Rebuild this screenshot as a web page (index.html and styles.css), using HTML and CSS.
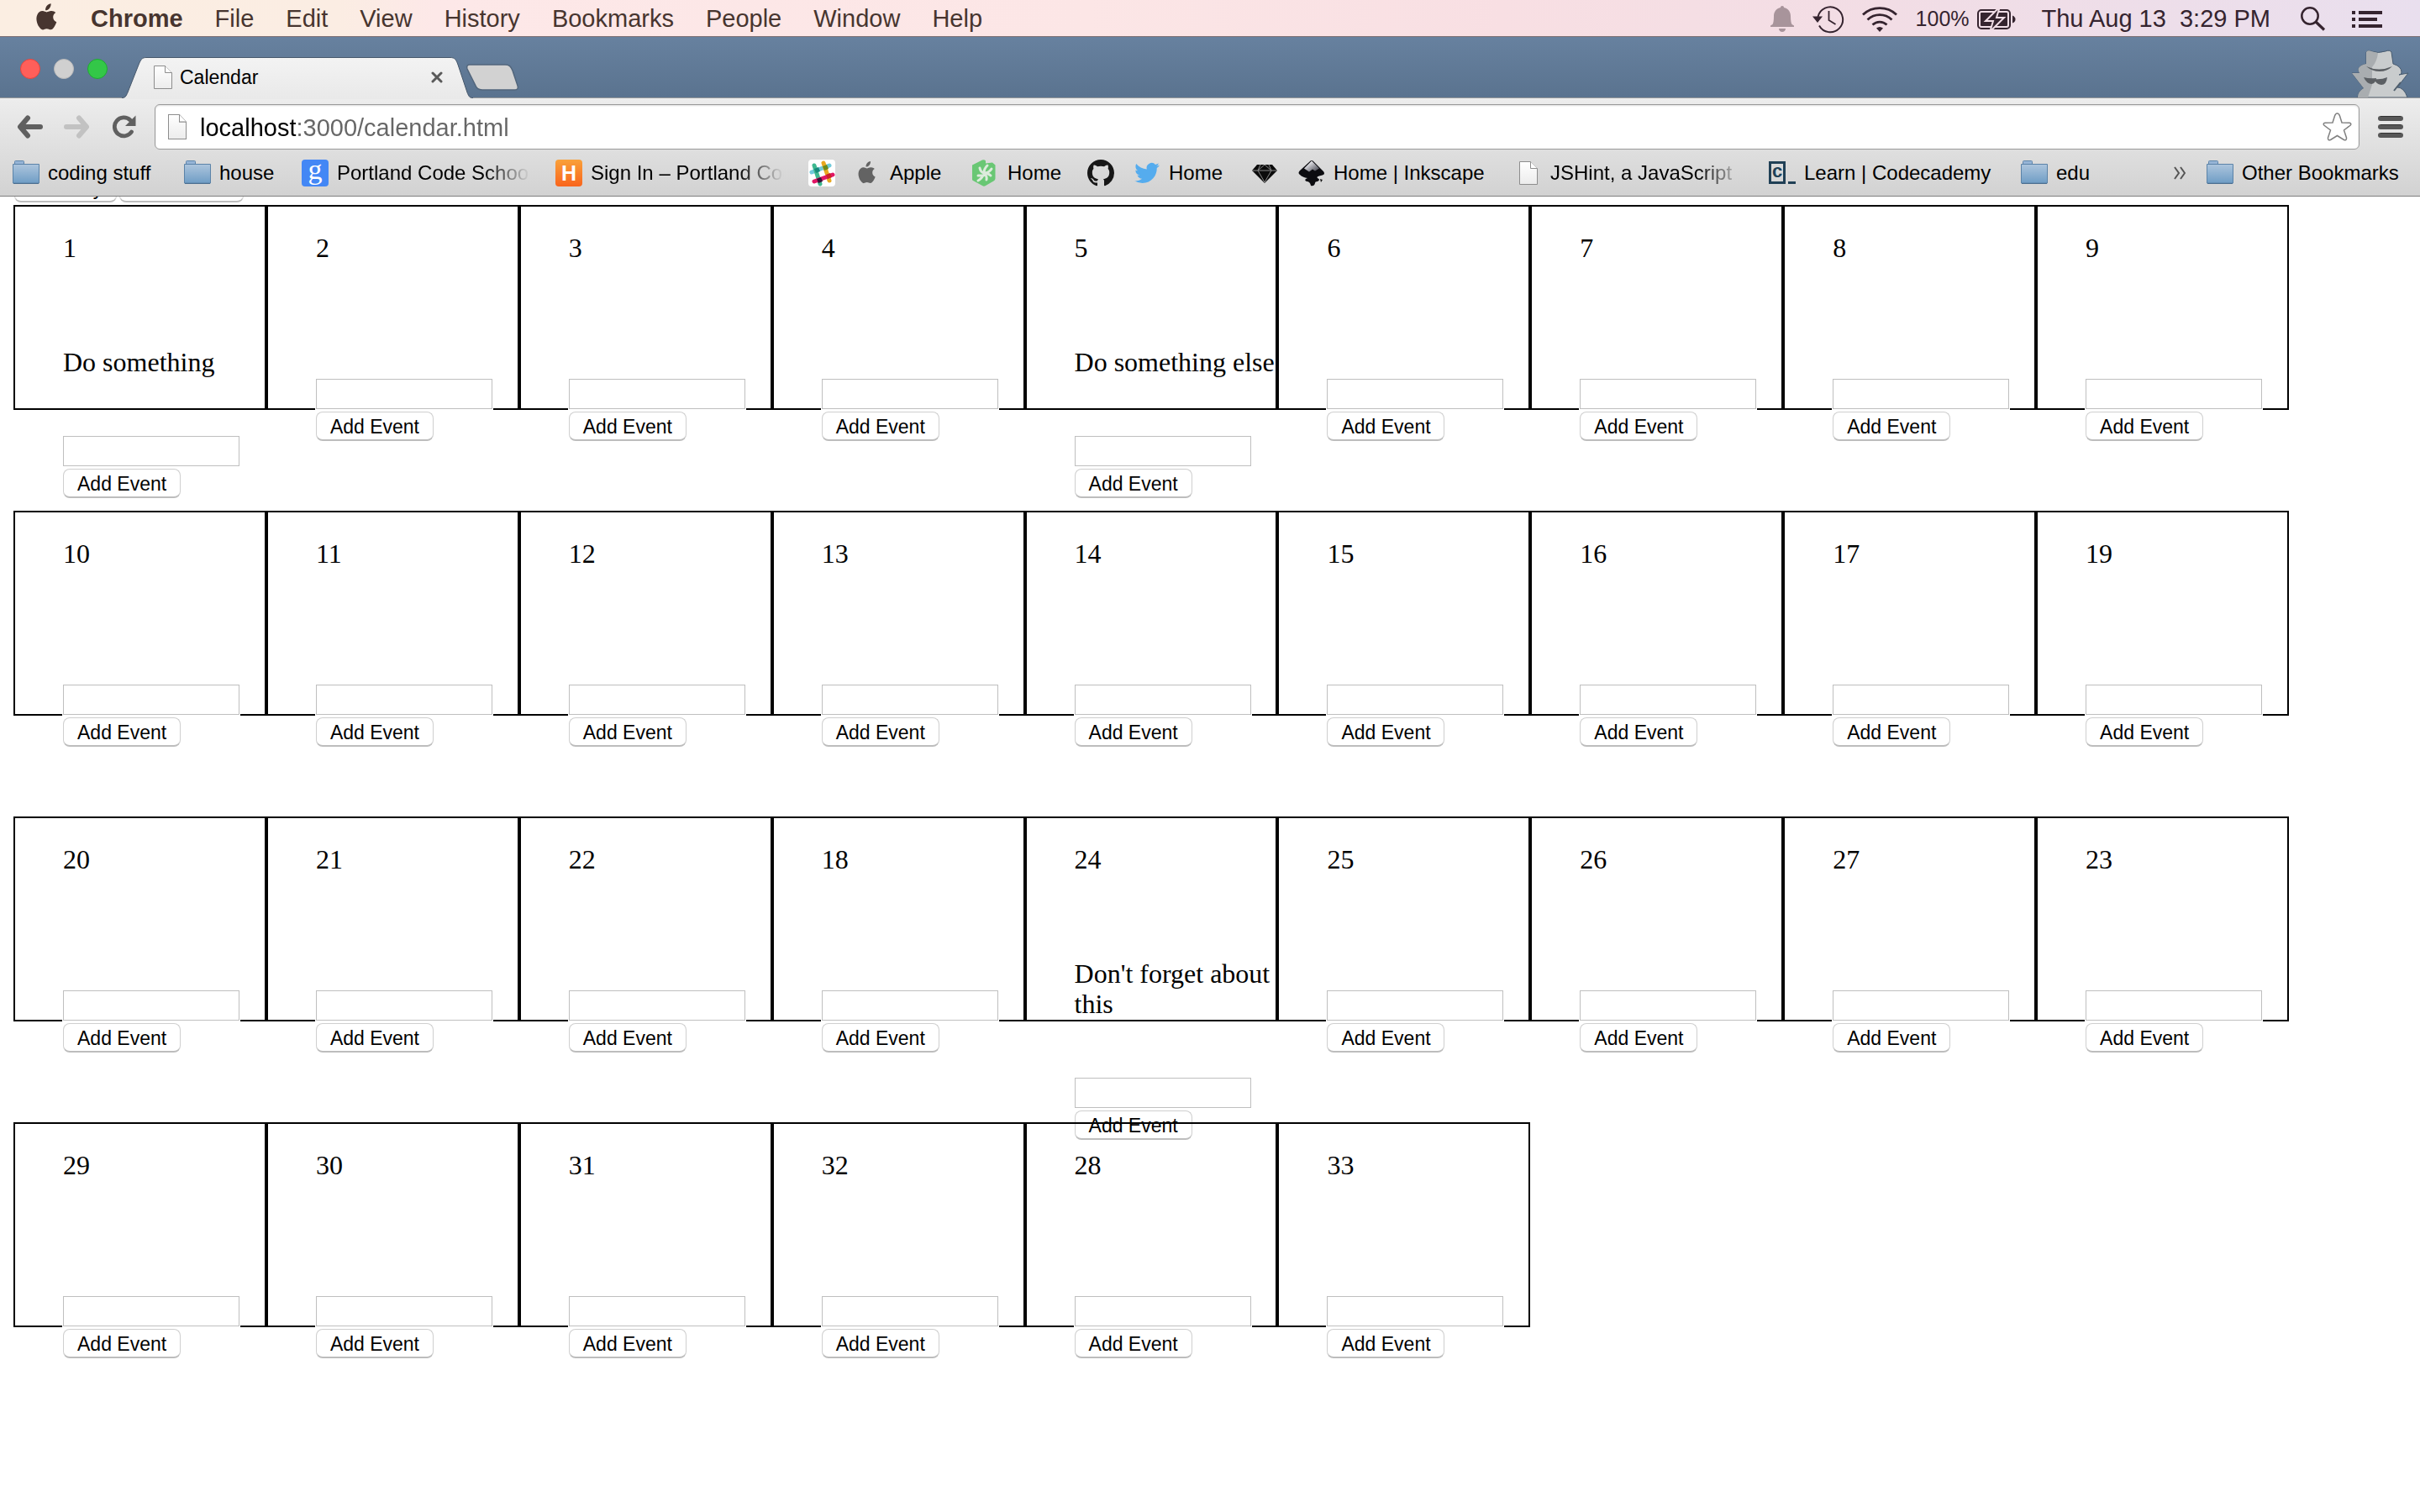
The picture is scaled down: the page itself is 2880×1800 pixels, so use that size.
FILE: index.html
```html
<!DOCTYPE html>
<html lang="en">
<head>
<meta charset="utf-8">
<title>Calendar</title>
<link rel="stylesheet" href="styles.css">
</head>
<body>
<svg class="symbols" aria-hidden="true">
  <defs>
    <linearGradient id="folder-fill" x1="0" y1="0" x2="0" y2="1"><stop offset="0" stop-color="#adc5dd"/><stop offset="1" stop-color="#6f9dc5"/></linearGradient>
    <linearGradient id="page-fill" x1="0" y1="0" x2="0" y2="1"><stop offset="0" stop-color="#fff"/><stop offset="1" stop-color="#ececec"/></linearGradient>
    <linearGradient id="tab-fill" x1="0" y1="0" x2="0" y2="1"><stop offset="0" stop-color="#f3f3f3"/><stop offset="1" stop-color="#e9e9e9"/></linearGradient>
    <linearGradient id="ink-fill" x1="0" y1="0" x2="1" y2="1"><stop offset="0.2" stop-color="#f4f4f8"/><stop offset="1" stop-color="#33343f"/></linearGradient>
    <symbol id="folder" viewBox="0 0 32 32"><path d="M2.500 5V2.500q0-1 1-1h9q1 0 1 1V5" fill="#96b4d6" stroke="#5f86ab"/><path d="M.5 5.500h31v22.500H.5z" fill="url(#folder-fill)" stroke="#5b83a8"/><path d="M1 28.500h30" stroke="#4c6f90"/></symbol>
    <symbol id="page" viewBox="0 0 22 28"><path d="M.5.500h13l8 8v19H.5z" fill="url(#page-fill)" stroke="#8d8d8d"/><path d="M13.500.500v8h8" fill="#fff" stroke="#8d8d8d"/></symbol>
    <symbol id="apple" viewBox="0 0 26 32"><path d="M18.600.3c.3 2.200-.6 4.200-1.800 5.600-1.200 1.400-3 2.400-4.700 2.300-.3-2.100.7-4.200 1.800-5.500C15.200 1.300 17.100.4 18.600.3zM24.300 11c-1.900 1.200-3.100 2.900-3.100 5.300 0 2.800 1.600 5 4.100 6-.6 1.900-1.500 3.700-2.600 5.400-1.100 1.700-2.400 3.600-4.400 3.600-1.900 0-2.500-1.100-4.700-1.100s-2.900 1.100-4.700 1.200c-1.900 0-3.300-1.900-4.500-3.600C2 24.200.3 18.100 2.300 13.700c1-2.500 3.500-4.600 6.300-4.600 2 0 3.600 1.300 5 1.300 1.200 0 3.200-1.500 5.800-1.300 1.900.1 3.700.8 4.900 1.900z" fill="currentColor"/></symbol>
  </defs>
</svg>

<header class="menubar">
  <nav class="menus" aria-label="Menu bar">
    <svg class="apple-logo" width="26" height="32"><use href="#apple"/></svg>
    <span class="app-name">Chrome</span><span>File</span><span>Edit</span><span>View</span><span>History</span><span>Bookmarks</span><span>People</span><span>Window</span><span>Help</span>
  </nav>
  <div class="status">
    <svg width="28" height="32" viewBox="0 0 28 32" fill="#a8949b"><path d="M14 0c1.300 0 2 .9 2 2 5 1 8 5 8 10 0 5 .5 8.500 1.500 10L28 23.500V25H0v-1.500L2.500 22C3.500 20.500 4 17 4 12c0-5 3-9 8-10 0-1.100.7-2 2-2zM10 27h8c0 2.500-2 4-4 4s-4-1.500-4-4z"/></svg>
    <svg class="clock" width="38" height="34" viewBox="0 0 38 34" fill="none" stroke="#35242f" stroke-width="2"><path d="M6.500 14A15 15 0 1 1 8 24.500"/><path d="M19.500 7v11l8 5" stroke-width="1.800"/><path d="M0 13.500h12L6 21z" fill="#35242f" stroke="none"/></svg>
    <svg class="wifi" width="42" height="30" viewBox="0 0 42 30" fill="none" stroke="#35242f" stroke-width="2.800"><path d="M1 9.500C12-1 30-1 41 9.500M6.500 15.500c8.500-7.800 20.500-7.800 29 0M12.500 21.500c5-4.600 12-4.600 17 0"/><path d="M17 25.500q4-3 8 0L21 30z" fill="#35242f" stroke="none"/></svg>
    <span class="charge">100%</span>
    <svg class="battery" width="46" height="26" viewBox="0 0 46 26"><rect x="1" y="2" width="38" height="22" rx="4" fill="none" stroke="#35242f" stroke-width="2"/><rect x="4" y="5" width="32" height="16" rx="1" fill="#35242f"/><path d="M42 8.500q3.500 1.500 3.500 4.500T42 17.500z" fill="#35242f"/><path d="M24 1 10 15h9l-3 10h2L32 11h-9l3-10z" fill="#35242f" stroke="#f0dde6" stroke-width="2"/></svg>
    <time class="date">Thu Aug 13&nbsp; 3:29 PM</time>
    <svg class="search" width="30" height="30" viewBox="0 0 30 30" fill="none" stroke="#35242f" stroke-width="2.500"><circle cx="11" cy="11" r="9.700"/><path d="m18 18 10 9.500" stroke-width="3.200"/></svg>
    <svg width="36" height="20" viewBox="0 0 36 20" fill="#35242f"><path d="M0 0h4v4H0zM8 0h28v4H8zM0 8h4v4H0zM8 8h22v4H8zM0 16h4v4H0zM8 16h28v4H8z"/></svg>
  </div>
</header>

<section class="tabstrip" aria-label="Tabs">
  <div class="lights">
    <button class="light close" aria-label="Close window"></button>
    <button class="light minimize" aria-label="Minimize window"></button>
    <button class="light maximize" aria-label="Zoom window"></button>
  </div>
  <div class="tab">
    <svg class="tab-shape" width="420" height="50" viewBox="0 0 420 50"><path d="M0 49c4 0 5-2 7-7L20 9c2.500-6 4-8.500 9-8.500h362c5 0 7 2.500 9 8.500l11 33c2 5 3 7 7 7v1H0z" fill="url(#tab-fill)"/><path d="M0 48.500c4 0 5-2 7-6.500L20 9c2.500-6 4-8.500 9-8.500h362c5 0 7 2.500 9 8.500l11 33c2 5 3 6.500 7 6.500" fill="none" stroke="#47586b"/></svg>
    <svg class="tab-icon" width="22" height="28"><use href="#page"/></svg>
    <span class="tab-title">Calendar</span>
    <button class="tab-close" aria-label="Close tab"><svg width="14" height="14" viewBox="0 0 14 14" stroke="#5a5a5a" stroke-width="3" stroke-linecap="round"><path d="m2 2 10 10M12 2 2 12"/></svg></button>
  </div>
  <button class="new-tab" aria-label="New tab"><svg width="64" height="32" viewBox="0 0 64 32"><path d="M5 1h42c5 0 7 2 9 7l6 18c1 3 0 5-3 5H20c-5 0-7-2-9-7L2 6C1 3 2 1 5 1z" fill="#d2d2d2" stroke="#52667c" stroke-width="1.500"/></svg></button>
  <svg class="incognito" width="68" height="57" viewBox="0 0 68 57">
    <path d="M17 3q2-3 6-1 8 3 17 0 5-2 7 1l2 14q10 3 10 10 0 3-3 3l11-2-13 17q8 0 12 12H7q0-7 7-11L0 28l9 0q-5-8 8-11z" fill="#c9cccd" stroke="#485b6f" stroke-width="1"/>
    <path d="M17 3q2-3 6-1l8 2q-1 10-7 17v21l-5 15H7q0-7 7-11L0 28l9 0q-5-8 8-11z" fill="#a9adb0"/>
    <path d="M17 20q15 7 31 0-6 6-15 6t-16-6zM14 33q7 2 15 1-1 7-6 7-6-1-9-8zM27 35q8 1 15-2-1 9-7 9-7-1-8-7z" fill="#5b5f63"/>
    <path d="m50 49 8-10" stroke="#4e5d6b" stroke-width="2"/>
  </svg>
</section>

<section class="chrome" aria-label="Browser toolbar">
  <div class="toolbar">
    <button aria-label="Back"><svg width="32" height="28" viewBox="0 0 32 28" fill="none" stroke="#606060" stroke-width="6" stroke-linecap="round" stroke-linejoin="round"><path d="M13 3.500 4 14l9 10.500M5 14h23"/></svg></button>
    <button class="forward" aria-label="Forward"><svg width="32" height="28" viewBox="0 0 32 28" fill="none" stroke="#c2c2c2" stroke-width="6" stroke-linecap="round" stroke-linejoin="round"><path d="m19 3.500 9 10.500-9 10.500M27 14H4"/></svg></button>
    <button class="reload" aria-label="Reload"><svg width="28" height="28" viewBox="0 0 28 28"><path d="M22.500 20A11 11 0 1 1 21 6" fill="none" stroke="#606060" stroke-width="4.800" stroke-linecap="round"/><path d="M27.500.500V13H15z" fill="#606060"/></svg></button>
    <div class="omnibox">
      <svg width="22" height="30" viewBox="0 0 22 28" preserveAspectRatio="none"><use href="#page"/></svg>
      <input class="address" type="text" aria-label="Address" value="localhost:3000/calendar.html">
      <button aria-label="Bookmark this page"><svg width="35" height="34" viewBox="0 0 35 34"><path d="M17.500 1q2 0 3 3l2.500 8 9 .3q3 .7 1 3L25.500 21l3 9q.3 3.500-3 2.500l-8-5-8 5q-3.300 1-3-2.500l3-9L2 15.300q-2-2.300 1-3l9-.3 2.500-8q1-3 3-3z" fill="#fff" stroke="#808080" stroke-width="1.500"/></svg></button>
    </div>
    <button aria-label="Chrome menu"><svg width="30" height="26" viewBox="0 0 30 26" fill="#575757"><rect width="30" height="6" rx="3"/><rect y="10" width="30" height="6" rx="3"/><rect y="20" width="30" height="6" rx="3"/><path d="M3 .5h24M3 10.500h24M3 20.500h24" stroke="#333"/></svg></button>
  </div>
  <nav class="bookmarks" aria-label="Bookmarks">
    <div class="bookmark-list">
      <a href="#"><svg class="icon"><use href="#folder"/></svg><span>coding stuff</span></a>
      <a href="#"><svg class="icon"><use href="#folder"/></svg><span>house</span></a>
      <a href="#"><i class="icon tile google">g</i><span class="fade">Portland Code School</span></a>
      <a href="#"><i class="icon tile heroku">H</i><span class="fade">Sign In – Portland Code</span></a>
      <a href="#" aria-label="Slack"><svg class="icon" viewBox="0 0 32 32"><rect width="32" height="32" rx="4" fill="#fff"/><g stroke-width="5" stroke-linecap="round"><path d="M4 15 25 7" stroke="#70cadb"/><path d="m18 4 7 21" stroke="#e9a820"/><path d="m7 7 7 22" stroke="#3eb890"/><path d="m7 26 22-8" stroke="#e01765"/></g><path d="m7 11 5-2 2 5-5 2z" fill="#168a7c"/><path d="m17 8 5-2 2 5-5 2z" fill="#6d8a1b"/><path d="m21 18 5-2 2 5-5 2z" fill="#cc2027"/><path d="m10 23 5-2 2 5-5 2z" fill="#361238"/></svg></a>
      <a href="#"><svg class="icon small-apple" viewBox="-2 -2 34 38"><use href="#apple" width="26" height="32"/></svg><span>Apple</span></a>
      <a href="#"><svg class="icon" viewBox="2 0 32 32"><path d="M12 1.500q4-2.500 6 0v3l8-1 3.500 3v16q0 2-2 3L18 31q-2 1.500-4 0L3 25q-2-1-2-3V9q0-2 2-3z" fill="#69c774"/><path d="M9 25q4-2 8-9m-8 3 6 0M11 10q1 5 5 6m4-9q-4 4-4 9m9-5q-3 5-9 5m8 3q-3-3-8-3m3 8q1-4-3-8" fill="none" stroke="#dcebdc" stroke-width="3" stroke-linecap="round"/></svg><span>Home</span></a>
      <a href="#" aria-label="GitHub"><svg class="icon" viewBox="0 0 16 16"><path fill="#171717" d="M8 0C3.580 0 0 3.580 0 8c0 3.540 2.290 6.530 5.470 7.590.4.070.55-.17.55-.38 0-.19-.01-.82-.01-1.490-2.010.37-2.530-.49-2.690-.94-.09-.23-.48-.94-.82-1.130-.28-.15-.68-.52-.01-.53.63-.01 1.080.58 1.230.82.720 1.210 1.870.87 2.330.66.070-.52.280-.87.510-1.070-1.780-.2-3.640-.89-3.640-3.950 0-.87.310-1.590.82-2.150-.08-.2-.36-1.020.08-2.120 0 0 .67-.21 2.200.82.640-.18 1.320-.27 2-.27s1.360.09 2 .27c1.530-1.040 2.200-.82 2.200-.82.440 1.100.16 1.920.08 2.120.51.560.82 1.270.82 2.150 0 3.070-1.870 3.750-3.650 3.950.29.250.54.730.54 1.480 0 1.070-.01 1.930-.01 2.200 0 .21.150.46.550.38A8 8 0 0 0 16 8c0-4.420-3.580-8-8-8z"/></svg></a>
      <a href="#"><svg class="icon" viewBox="-1 -1 26 26"><path fill="#55acee" d="M23.950 4.570a10 10 0 0 1-2.820.77 4.960 4.960 0 0 0 2.160-2.720c-.95.550-2 .95-3.130 1.180a4.920 4.920 0 0 0-8.380 4.480C7.690 8.100 4.070 6.130 1.640 3.160a4.820 4.820 0 0 0-.67 2.480c0 1.710.87 3.210 2.190 4.100a4.900 4.900 0 0 1-2.230-.62v.06a4.920 4.920 0 0 0 3.950 4.830 5 5 0 0 1-2.210.08 4.940 4.940 0 0 0 4.600 3.420A9.870 9.870 0 0 1 0 19.540a13.990 13.990 0 0 0 7.550 2.210c9.050 0 14-7.500 14-13.980 0-.21 0-.42-.02-.63a9.940 9.940 0 0 0 2.460-2.550z"/></svg><span>Home</span></a>
      <a href="#" aria-label="Diamond"><svg class="icon" viewBox="0 0 32 32"><path d="M7 6h18l6 7-15 15L1 13z" fill="#0b0b0b"/><path d="M1 13h30M11 6l-3 7 8 14 8-14-3-7M8 13l8-7 8 7" fill="none" stroke="#888"/></svg></a>
      <a href="#"><svg class="icon" viewBox="0 0 32 32"><path d="M13 3q3-4 6 0l11 11q3 4-3 5-6 1-4 3 4 2 0 4-3 0-3 2-1 4-5 3-1-5-5-5-4-2 1-4-6-1-9-4-3-2 0-5z" fill="#0c0c10"/><path d="m16 1.500 9 9-5 3-3-2-4 3-6-4z" fill="url(#ink-fill)"/><path d="m26 23 3 1-2 3z" fill="#111"/></svg><span>Home | Inkscape</span></a>
      <a href="#"><svg class="icon" viewBox="-5 -2 32 32"><use href="#page" width="22" height="28"/></svg><span class="fade">JSHint, a JavaScript</span></a>
      <a href="#"><i class="icon code"><b>c</b></i><span>Learn | Codecademy</span></a>
      <a href="#"><svg class="icon"><use href="#folder"/></svg><span>edu</span></a>
    </div>
    <button class="overflow" aria-label="More bookmarks"><svg width="14" height="16" viewBox="0 0 14 16" fill="none" stroke="#555" stroke-width="2"><path d="m1 1 5 7-5 7M8 1l5 7-5 7"/></svg></button>
    <a class="other" href="#"><svg class="icon"><use href="#folder"/></svg><span>Other Bookmarks</span></a>
  </nav>
</section>

<main class="page">
  <div class="actions"><button class="push">Add Day</button><button class="push wide">Add Month</button></div>
  <ol class="calendar">
    <li class="day"><span class="number">1</span><p class="event">Do something</p><form><input type="text" aria-label="Event for day 1"><button type="button" class="push">Add Event</button></form></li>
    <li class="day"><span class="number">2</span><form><input type="text" aria-label="Event for day 2"><button type="button" class="push">Add Event</button></form></li>
    <li class="day"><span class="number">3</span><form><input type="text" aria-label="Event for day 3"><button type="button" class="push">Add Event</button></form></li>
    <li class="day"><span class="number">4</span><form><input type="text" aria-label="Event for day 4"><button type="button" class="push">Add Event</button></form></li>
    <li class="day"><span class="number">5</span><p class="event">Do something else</p><form><input type="text" aria-label="Event for day 5"><button type="button" class="push">Add Event</button></form></li>
    <li class="day"><span class="number">6</span><form><input type="text" aria-label="Event for day 6"><button type="button" class="push">Add Event</button></form></li>
    <li class="day"><span class="number">7</span><form><input type="text" aria-label="Event for day 7"><button type="button" class="push">Add Event</button></form></li>
    <li class="day"><span class="number">8</span><form><input type="text" aria-label="Event for day 8"><button type="button" class="push">Add Event</button></form></li>
    <li class="day"><span class="number">9</span><form><input type="text" aria-label="Event for day 9"><button type="button" class="push">Add Event</button></form></li>
    <li class="day"><span class="number">10</span><form><input type="text" aria-label="Event for day 10"><button type="button" class="push">Add Event</button></form></li>
    <li class="day"><span class="number">11</span><form><input type="text" aria-label="Event for day 11"><button type="button" class="push">Add Event</button></form></li>
    <li class="day"><span class="number">12</span><form><input type="text" aria-label="Event for day 12"><button type="button" class="push">Add Event</button></form></li>
    <li class="day"><span class="number">13</span><form><input type="text" aria-label="Event for day 13"><button type="button" class="push">Add Event</button></form></li>
    <li class="day"><span class="number">14</span><form><input type="text" aria-label="Event for day 14"><button type="button" class="push">Add Event</button></form></li>
    <li class="day"><span class="number">15</span><form><input type="text" aria-label="Event for day 15"><button type="button" class="push">Add Event</button></form></li>
    <li class="day"><span class="number">16</span><form><input type="text" aria-label="Event for day 16"><button type="button" class="push">Add Event</button></form></li>
    <li class="day"><span class="number">17</span><form><input type="text" aria-label="Event for day 17"><button type="button" class="push">Add Event</button></form></li>
    <li class="day"><span class="number">19</span><form><input type="text" aria-label="Event for day 19"><button type="button" class="push">Add Event</button></form></li>
    <li class="day"><span class="number">20</span><form><input type="text" aria-label="Event for day 20"><button type="button" class="push">Add Event</button></form></li>
    <li class="day"><span class="number">21</span><form><input type="text" aria-label="Event for day 21"><button type="button" class="push">Add Event</button></form></li>
    <li class="day"><span class="number">22</span><form><input type="text" aria-label="Event for day 22"><button type="button" class="push">Add Event</button></form></li>
    <li class="day"><span class="number">18</span><form><input type="text" aria-label="Event for day 18"><button type="button" class="push">Add Event</button></form></li>
    <li class="day"><span class="number">24</span><p class="event">Don't forget about this</p><form><input type="text" aria-label="Event for day 24"><button type="button" class="push">Add Event</button></form></li>
    <li class="day"><span class="number">25</span><form><input type="text" aria-label="Event for day 25"><button type="button" class="push">Add Event</button></form></li>
    <li class="day"><span class="number">26</span><form><input type="text" aria-label="Event for day 26"><button type="button" class="push">Add Event</button></form></li>
    <li class="day"><span class="number">27</span><form><input type="text" aria-label="Event for day 27"><button type="button" class="push">Add Event</button></form></li>
    <li class="day"><span class="number">23</span><form><input type="text" aria-label="Event for day 23"><button type="button" class="push">Add Event</button></form></li>
    <li class="day"><span class="number">29</span><form><input type="text" aria-label="Event for day 29"><button type="button" class="push">Add Event</button></form></li>
    <li class="day"><span class="number">30</span><form><input type="text" aria-label="Event for day 30"><button type="button" class="push">Add Event</button></form></li>
    <li class="day"><span class="number">31</span><form><input type="text" aria-label="Event for day 31"><button type="button" class="push">Add Event</button></form></li>
    <li class="day"><span class="number">32</span><form><input type="text" aria-label="Event for day 32"><button type="button" class="push">Add Event</button></form></li>
    <li class="day"><span class="number">28</span><form><input type="text" aria-label="Event for day 28"><button type="button" class="push">Add Event</button></form></li>
    <li class="day"><span class="number">33</span><form><input type="text" aria-label="Event for day 33"><button type="button" class="push">Add Event</button></form></li>
  </ol>
</main>
</body>
</html>
```

FILE: styles.css
```css
* { box-sizing: border-box; }

body {
  margin: 0;
  min-height: 100vh;
  background: #fff;
  font-family: "Liberation Sans", Arial, sans-serif;
  color: #000;
}

button { padding: 0; border: 0; background: none; font: inherit; color: inherit; }
button svg { display: block; }
a { color: inherit; text-decoration: none; }
.symbols { display: block; width: 0; height: 0; }

/* System menu bar */
.menubar {
  display: flex;
  align-items: center;
  justify-content: space-between;
  height: 44px;
  padding: 2px 45px 0 42px;
  border-bottom: 1px solid #7c6f73;
  background: linear-gradient(90deg, #fbeee2 0, #fbede3 14%, #fde8e8 18%, #fce6e6 45%, #f8dfe3 62%, #f2dde5 78%, #e9dfee 100%);
  font-size: 29px;
  color: #47352f;
}
.menus { display: flex; align-items: center; gap: 38px; }
.apple-logo { margin-bottom: 5px; }
.app-name { margin-left: 2px; font-weight: bold; }
.status { display: flex; align-items: center; color: #35242f; }
.clock { margin-left: 22px; }
.wifi { margin-left: 21px; }
.charge { margin-left: 22px; font-size: 25px; }
.battery { margin-left: 9px; }
.date { margin-left: 31px; white-space: pre; }
.search { margin: 0 31px 0 36px; }

/* Tab strip */
.tabstrip {
  display: flex;
  align-items: flex-end;
  height: 73px;
  padding: 0 13px 0 24px;
  border-bottom: 1px solid #97999b;
  background: linear-gradient(#67819f, #5a738f);
}
.lights { display: flex; gap: 16px; padding-bottom: 22px; }
.light { width: 24px; height: 24px; border: 1px solid; border-radius: 50%; }
.close { background: #ff5f5a; border-color: #e2443f; }
.minimize { background: #d0d0d0; border-color: #b9b9b9; }
.maximize { background: #33c748; border-color: #1fa833; }
.tab {
  position: relative;
  display: flex;
  align-items: center;
  width: 418px;
  height: 48px;
  margin-left: 17px;
  padding: 0 36px 0 38px;
  font-size: 23px;
}
.tab-shape { position: absolute; left: 0; top: 0; }
.tab-icon, .tab-title, .tab-close { position: relative; }
.tab-title { flex: 1; margin-left: 9px; }
.new-tab { margin: 0 auto 8px -9px; position: relative; }
.incognito { display: block; }

/* Toolbar and bookmarks */
.chrome {
  border-bottom: 1px solid #7e7e7e;
  background: linear-gradient(#ededed, #d2d2d2);
}
.toolbar { display: flex; align-items: center; padding: 7px 20px 0 20px; }
.forward { margin-left: 23px; }
.reload { margin: 0 22px 0 27px; }
.omnibox {
  display: flex;
  flex: 1;
  align-items: center;
  height: 54px;
  margin-right: 22px;
  padding: 0 8px 0 15px;
  border: 1px solid #9a9a9a;
  border-radius: 6px;
  background: #fff;
  box-shadow: inset 0 1px 2px #ddd;
}
.address {
  flex: 1;
  min-width: 0;
  height: 42px;
  margin-left: 16px;
  padding: 2px 0 0;
  border: 0;
  outline: 0;
  background: linear-gradient(90deg, #000 114px, #666 114px);
  -webkit-background-clip: text;
  background-clip: text;
  font: 29px "Liberation Sans", Arial, sans-serif;
  color: #666;
  -webkit-text-fill-color: transparent;
}
.bookmarks {
  display: flex;
  align-items: center;
  height: 55px;
  padding: 0 22px 0 15px;
  font-size: 24px;
  white-space: nowrap;
}
.bookmarks a { display: flex; align-items: center; gap: 10px; min-width: 0; }
.bookmarks span { padding-top: 1px; }
.bookmark-list {
  display: grid;
  grid-template-columns: 204px 140px 302px 301px 55px 140px 137px 55px 140px 56px 258px 302px 300px 100px;
}
.icon { flex: none; width: 32px; height: 32px; }
.fade {
  width: 230px;
  overflow: hidden;
  -webkit-mask-image: linear-gradient(90deg, #000 76%, transparent);
  mask-image: linear-gradient(90deg, #000 76%, transparent);
}
.small-apple { color: #636363; }
.tile {
  border-radius: 4px;
  color: #fff;
  font-style: normal;
  text-align: center;
  line-height: 32px;
}
.google { background: #4387f5; font-family: "Liberation Serif", serif; font-size: 34px; line-height: 24px; }
.heroku { background: linear-gradient(#f9a13a, #f9641c); font-weight: bold; font-size: 25px; }
.code { display: flex; align-items: center; font-style: normal; }
.code b {
  width: 20px;
  height: 27px;
  border: 3px solid #204056;
  color: #204056;
  font-size: 22px;
  line-height: 18px;
  text-align: center;
}
.code::after { content: ""; align-self: flex-end; width: 9px; height: 3px; margin: 0 0 3px 3px; background: #204056; }
.overflow { margin-left: auto; margin-right: 25px; }
.other span { min-width: 190px; }

/* Calendar page */
.page { overflow: hidden; padding: 0 156px 180px 16px; }
.actions { display: flex; gap: 3px; height: 36px; margin: -28px 0 2px 1px; }
.push {
  display: block;
  min-width: 120px;
  height: 35px;
  padding: 0 16px;
  border: 1px solid #cfcfcf;
  border-bottom: 2px solid #bdbdbd;
  border-radius: 8px;
  background: #fff;
  font-size: 23px;
  line-height: 34px;
  white-space: nowrap;
}
.wide { min-width: 148px; }
.calendar {
  display: grid;
  grid-template-columns: repeat(9, 1fr);
  grid-auto-rows: 244px;
  row-gap: 120px;
  margin: 0;
  padding: 0;
  list-style: none;
  font: 32px/36px "Liberation Serif", "Times New Roman", serif;
}
.day {
  display: flex;
  flex-direction: column;
  min-width: 0;
  padding: 31px 0 0 57px;
  border: 2px solid #000;
}
.number { margin-bottom: 100px; }
.event { margin: 0 0 32px; }
.day form { margin-top: 38px; font-family: "Liberation Sans", Arial, sans-serif; }
.day input {
  display: block;
  width: 210px;
  height: 36px;
  padding: 0 4px;
  border: 1px solid #bfbfbf;
  background: #fff;
  box-shadow: 0 0 0 1px #fff;
}
.day .push { width: 140px; margin-top: 3px; }
```
